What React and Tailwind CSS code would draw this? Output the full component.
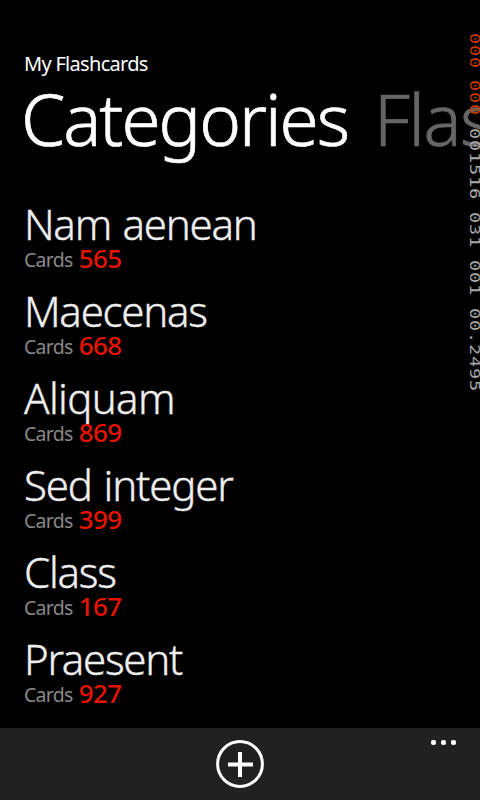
const categories = [
  { name: "Nam aenean", count: 565, tracking: "tracking-[-1.25px] [word-spacing:2px]" },
  { name: "Maecenas", count: 668, tracking: "tracking-[-1.25px]" },
  { name: "Aliquam", count: 869, tracking: "tracking-[-0.65px]" },
  { name: "Sed integer", count: 399, tracking: "tracking-[-1.15px] [word-spacing:2px]" },
  { name: "Class", count: 167, tracking: "tracking-[-1.2px]" },
  { name: "Praesent", count: 927, tracking: "tracking-[-1.3px]" },
];

function Counter({ children, className }) {
  return (
    <div className={`w-full ${className}`}>
      <span className="block origin-top scale-y-[1.33] text-[14px] leading-[11px] tracking-[0.6px] [writing-mode:vertical-rl]">
        {children}
      </span>
    </div>
  );
}

export default function App() {
  return (
    <div className="relative flex h-[800px] w-[480px] flex-col overflow-hidden bg-black font-['Noto_Sans','Open_Sans',sans-serif] text-white">
      <header className="pl-6 pt-[50px]">
        <p className="h-7 text-[20px] leading-7 tracking-[-0.7px]">My Flashcards</p>
        <div className="-mt-1 flex h-[90px] items-start gap-[26px] whitespace-nowrap text-[71px] font-light leading-[90px] [-webkit-text-stroke:0.7px]">
          <h1 className="-ml-[3px] w-[327px] tracking-[-2px]">Categories</h1>
          <span className="text-[#666] tracking-[-1.5px]">Flashcards</span>
        </div>
      </header>
      <ul className="flex flex-1 flex-col pl-6 pt-[36px]">
        {categories.map((c) => (
          <li key={c.name} className="h-[87px] whitespace-nowrap">
            <div className={`h-[46px] text-[42px] font-light leading-[48px] text-[#eee] [-webkit-text-stroke:0.4px] ${c.tracking}`}>{c.name}</div>
            <div className="flex h-6 items-baseline gap-[6px] leading-6">
              <span className="-translate-y-px text-[19.5px] tracking-[-0.7px] text-[#888]">Cards</span>
              <span className="text-[26px] font-medium tracking-[-0.6px] text-[#e51400]">{c.count}</span>
            </div>
          </li>
        ))}
      </ul>
      <footer className="relative flex h-[72px] shrink-0 items-center justify-center bg-[#212121]">
        <svg viewBox="0 0 48 48" className="size-12" fill="none" stroke="white">
          <circle cx="24" cy="24" r="22.4" strokeWidth="3" />
          <path d="M24 12v25M12 24.5h25" strokeWidth="4" />
        </svg>
        <div className="absolute right-6 top-[12px] flex gap-[5px]">
          <i className="h-[5px] w-[5px] rounded-[2px] bg-white" />
          <i className="h-[5px] w-[5px] rounded-[2px] bg-white" />
          <i className="h-[5px] w-[5px] rounded-[2px] bg-white" />
        </div>
      </footer>
      <aside className="absolute left-[469px] top-[33px] w-[11px] font-['DejaVu_Sans_Mono',monospace]">
        <Counter className="h-[47px] text-[#c83c00]">000</Counter>
        <Counter className="h-[48px] text-[#c83c00]">000</Counter>
        <Counter className="h-[84px] text-[#aaa]">001516</Counter>
        <Counter className="h-[48px] text-[#aaa]">031</Counter>
        <Counter className="h-[48px] text-[#aaa]">001</Counter>
        <Counter className="text-[#aaa]">00.2495</Counter>
      </aside>
    </div>
  );
}
